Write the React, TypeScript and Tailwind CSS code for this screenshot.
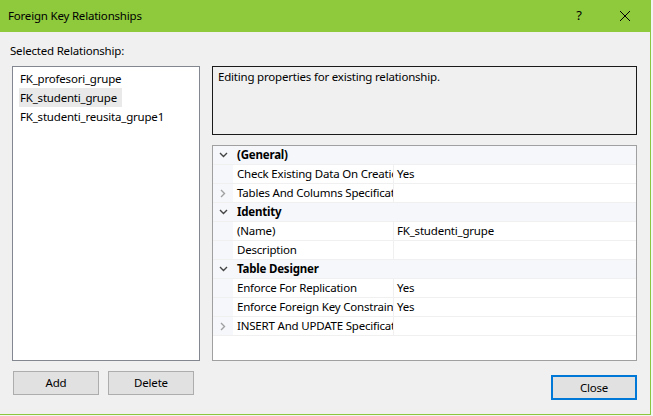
type Row =
  | { kind: "cat"; label: string }
  | { kind: "prop"; label: string; value?: string; expandable?: boolean }

const rows: Row[] = [
  { kind: "cat", label: "(General)" },
  { kind: "prop", label: "Check Existing Data On Creation Or Re-Enabling", value: "Yes" },
  { kind: "prop", label: "Tables And Columns Specification", expandable: true },
  { kind: "cat", label: "Identity" },
  { kind: "prop", label: "(Name)", value: "FK_studenti_grupe" },
  { kind: "prop", label: "Description" },
  { kind: "cat", label: "Table Designer" },
  { kind: "prop", label: "Enforce For Replication", value: "Yes" },
  { kind: "prop", label: "Enforce Foreign Key Constraint", value: "Yes" },
  { kind: "prop", label: "INSERT And UPDATE Specification", expandable: true },
]

const relationships = ["FK_profesori_grupe", "FK_studenti_grupe", "FK_studenti_reusita_grupe1"]

function Chevron({ open }: { open: boolean }) {
  return open ? (
    <svg width="9" height="6" viewBox="0 0 9 6">
      <path d="M1 1L4.5 4.5L8 1" fill="none" stroke="#444" strokeWidth="1.4" />
    </svg>
  ) : (
    <svg width="6" height="9" viewBox="0 0 6 9">
      <path d="M1 1L4.5 4.5L1 8" fill="none" stroke="#a0a0a0" strokeWidth="1.4" />
    </svg>
  )
}

export default function App() {
  return (
    <div
      className="w-[653px] h-[416px] bg-[#f3f3f3] overflow-hidden text-[11.5px] tracking-[-0.2px] text-black"
      style={{ fontFamily: '"Segoe UI", "Noto Sans", sans-serif' }}
    >
      <div className="w-[651px] h-[415px] flex flex-col border-r border-b border-[#8cc63f] bg-[#f0f0f0]">
        {/* Title bar */}
        <div className="h-[32px] shrink-0 bg-[#8fca3d] flex items-center pl-[8px]">
          <span className="flex-1">Foreign Key Relationships</span>
          <span className="w-[46px] text-center text-[13px]">?</span>
          <span className="w-[46px] flex justify-center mr-[2px]">
            <svg width="12" height="12" viewBox="0 0 12 12">
              <path d="M1 1L11 11M11 1L1 11" stroke="#000" strokeWidth="1" />
            </svg>
          </span>
        </div>

        {/* Body */}
        <div className="flex-1 flex flex-col pl-[12px] pr-[13px] pt-[11px]">
          <div className="leading-[16px] -ml-[2px]">Selected Relationship:</div>
          <div className="flex gap-[12px] mt-[7px] h-[295px]">
            {/* List */}
            <div className="w-[188px] bg-white border border-[#828790] pt-[2px] px-[6px]">
              {relationships.map((r, i) => (
                <div
                  key={r}
                  className={`h-[19px] leading-[19px] px-[1px] w-fit pr-[5px] ${i === 1 ? "bg-[#e9e9e9]" : ""}`}
                >
                  {r}
                </div>
              ))}
            </div>

            {/* Right column */}
            <div className="flex-1 flex flex-col">
              <div className="h-[69px] border border-[#1a1a1a] px-[5px] pt-[2px] leading-[16px]">
                Editing properties for existing relationship.
              </div>
              <div className="mt-[10px] flex-1 bg-white border border-[#a0a0a0]">
                {rows.map((row) => (
                  <div key={row.label} className="flex h-[19px] border-b border-[#f0f0f0]">
                    <div className="w-[20px] shrink-0 bg-[#f5f7fa] flex items-center justify-center">
                      {row.kind === "cat" ? <Chevron open /> : row.expandable ? <Chevron open={false} /> : null}
                    </div>
                    {row.kind === "cat" ? (
                      <div className="flex-1 bg-[#f5f7fa] pl-[4px] leading-[18px] font-bold">{row.label}</div>
                    ) : (
                      <>
                        <div className="w-[161px] shrink-0 pl-[4px] leading-[18px] whitespace-nowrap overflow-hidden border-r border-[#f0f0f0]">
                          {row.label}
                        </div>
                        <div className="flex-1 pl-[3px] leading-[18px]">{row.value}</div>
                      </>
                    )}
                  </div>
                ))}
              </div>
            </div>
          </div>

          {/* Buttons */}
          <div className="flex mt-[10px]">
            <button className="w-[86px] h-[24px] ml-[1px] bg-[#e1e1e1] border border-[#adadad]">Add</button>
            <button className="w-[86px] h-[24px] ml-[9px] bg-[#e1e1e1] border border-[#adadad]">Delete</button>
            <div className="flex-1" />
            <button className="w-[86px] h-[25px] mt-[4px] bg-[#e1e1e1] border-2 border-[#0078d7]">Close</button>
          </div>
        </div>
      </div>
    </div>
  )
}
